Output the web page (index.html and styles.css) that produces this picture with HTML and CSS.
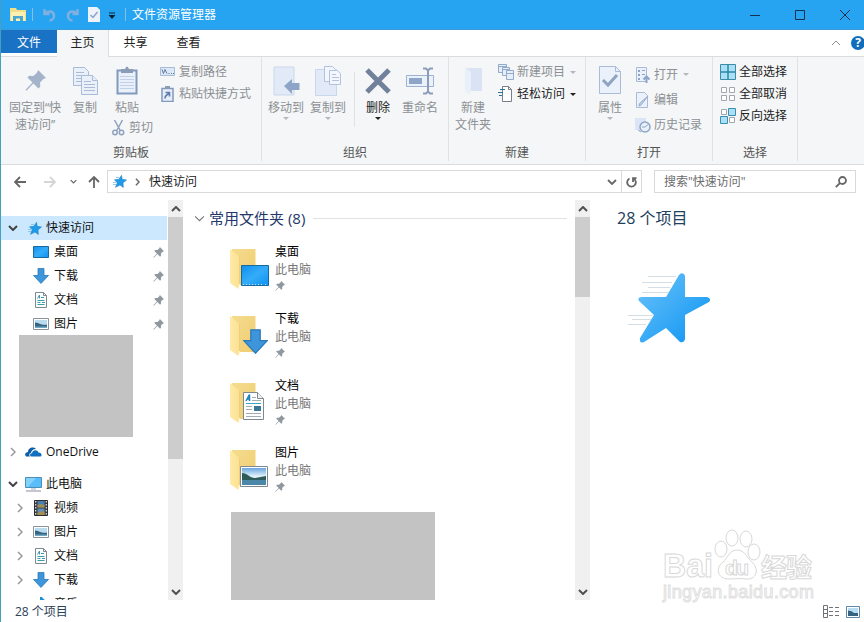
FILE: index.html
```
<!DOCTYPE html>
<html lang="zh-CN">

<head>
  <meta charset="utf-8">
  <title>文件资源管理器</title>
  <link rel="stylesheet" href="styles.css">
</head>

<body>
  <!-- 共用图标 -->
  <svg class="defs" width="0" height="0">
    <defs>
      <linearGradient id="blue" x1="0" y1="0" x2="1" y2="1">
        <stop offset="0" stop-color="#6cc4fa"/><stop offset="1" stop-color="#0a92f2"/>
      </linearGradient>
      <linearGradient id="screen" x1="0" y1="0" x2="1" y2="1">
        <stop offset="0" stop-color="#0d8ff0"/><stop offset=".5" stop-color="#35acf8"/><stop offset="1" stop-color="#0c92f2"/>
      </linearGradient>
      <linearGradient id="yellow" x1="0" y1="0" x2="1" y2="1">
        <stop offset="0" stop-color="#f5dc90"/><stop offset="1" stop-color="#efcd70"/>
      </linearGradient>
      <linearGradient id="front" x1="0" y1="0" x2="1" y2="0">
        <stop offset="0" stop-color="#ffeaa6"/><stop offset="1" stop-color="#fbe192"/>
      </linearGradient>
      <linearGradient id="sky" x1="0" y1="0" x2="0" y2="1">
        <stop offset="0" stop-color="#6aa5e0"/><stop offset=".5" stop-color="#e4f3fa"/>
      </linearGradient>
    </defs>
    <symbol id="pin" viewBox="0 0 12 12">
      <path d="M7.500 0L12 4.500l-1.500.7-1.900 2 .1 2.400-1 1-2.900-2.900-4 4.100-.5-.5 4-4.100L1.400 4.300l1-1 2.400.1 2-1.900z"/>
    </symbol>
    <symbol id="star" viewBox="0 0 72 70">
      <path d="M41 2Q43-1 46 1L47 3V24H69Q74 26 71 29L47 42V66Q46 70 42 69L28 55 6 69Q1 71 2 65L16 42 1 28Q-1 24 4 24H28Z" fill="url(#blue)"/>
    </symbol>
    <symbol id="star-sm" viewBox="0 0 14 13">
      <path d="M8.500.3L9.200 4.300 13.500 5 10 7.800 10.300 12.500 7 10 2.500 12.300 4.300 7.800 1.500 4.800 6 4.300z" fill="#1e9bea" stroke="#2483c0" stroke-width=".6"/>
      <path d="M3 2.500h3.500M0 7.500h3M0 9.500h3" stroke="#7cbfe6" stroke-width=".8"/>
    </symbol>
    <symbol id="desktop" viewBox="0 0 16 12">
      <path d="M.5.5h15v11H.5z" fill="url(#screen)" stroke="#17699f"/>
    </symbol>
    <symbol id="down" viewBox="0 0 16 16">
      <path d="M5 .5h6v7h4.500L8 15.500.5 7.500H5z" fill="#3d95dc" stroke="#2c78b8" stroke-width=".8"/>
    </symbol>
    <symbol id="doc" viewBox="0 0 12 16">
      <path d="M.5.5h8l3 3v12H.5z" fill="#fff" stroke="#7e8890"/>
      <path d="M8.500.5v3h3" fill="none" stroke="#7e8890"/>
      <path d="M2.500 6.500L4.500 3v3.500M6 5.500h3M2.500 8.500h7M2.500 10.500h3M2.500 12.500h7M7 10.500h3" fill="none" stroke="#3a9bab"/>
    </symbol>
    <symbol id="pic" viewBox="0 0 16 12">
      <path d="M.5.5h15v11H.5z" fill="#fff" stroke="#8b9299"/>
      <path d="M2 2h12v8H2z" fill="#b9dcf2"/>
      <path d="M2 4.500c3 0 5 2 8 2.200h4V10H2z" fill="#34647f"/>
      <path d="M2 8.500h12V10H2z" fill="#6fa7c6"/>
    </symbol>
    <symbol id="video" viewBox="0 0 14 16">
      <path d="M.5.5h13v15H.5z" fill="#3c3c40" stroke="#2d2d30"/>
      <path d="M3.500 1h7v6.500h-7z" fill="#4a7fb5"/><path d="M3.500 8.500h7V15h-7z" fill="#5f8fbd"/>
      <path d="M3.500 5l3-1 4 1v2.500h-7zM3.500 13l4-2 3 1v3h-7z" fill="#a58f4e"/>
      <path d="M1.700 1v14M12.300 1v14" stroke="#e8e8e8" stroke-width="1.200" stroke-dasharray="1.500 1.500"/>
    </symbol>
    <symbol id="folder" viewBox="0 0 27 42">
      <path d="M2 1h23.500v36H3z" fill="url(#yellow)"/>
      <path d="M0 1L9.500 9v27l-1 5-8.500-6z" fill="url(#front)"/>
      <path d="M9.500 9v27" stroke="#e9c873" stroke-width=".6"/>
      <path d="M8.500 41l1-5" stroke="#fff6d8" fill="none"/>
    </symbol>
    <symbol id="chev-r" viewBox="0 0 6 10"><path d="M1 1l4 4-4 4"/></symbol>
    <symbol id="chev-d" viewBox="0 0 10 6"><path d="M1 1l4 4 4-4"/></symbol>
    <symbol id="chev-u" viewBox="0 0 10 6"><path d="M1 5l4-4 4 4"/></symbol>
  </svg>

  <div class="window">
    <div class="titlebar">
      <svg class="app-icon" width="18" height="16" viewBox="0 0 18 16">
        <path d="M1 1h6l1 2h9v11H1z" fill="#f3df8a"/>
        <path d="M2 5h14v9H2z" fill="#fbf0b4"/>
        <path d="M4 14V9h10v5h-3v-2.500H7V14z" fill="#4ba6d2"/>
      </svg>
      <span class="divider"></span>
      <svg class="undo" width="13" height="14" viewBox="0 0 13 14"><path d="M1.500 1v5h5M2 5.500C5 2 11 3 11 8c0 3-2.500 4.500-4.500 4.500"/></svg>
      <svg class="redo" width="13" height="14" viewBox="0 0 13 14"><path d="M11.500 1v5h-5M11 5.500C8 2 2 3 2 8c0 3 2.500 4.500 4.500 4.500"/></svg>
      <svg class="check" width="12" height="15" viewBox="0 0 12 15"><path d="M0 0h9l3 3v12H0z" fill="#eef3fb"/><path d="M2.500 8l2.500 2.500L9.500 5" fill="none" stroke="#8ba3c9" stroke-width="1.500"/></svg>
      <svg class="custom" width="8" height="8" viewBox="0 0 8 8"><path d="M1 1h6" stroke="#123"/><path d="M.5 3h7L4 7z" fill="#123"/></svg>
      <span class="divider"></span>
      <span class="title">文件资源管理器</span>
      <div class="controls">
        <svg width="10" height="10"><path d="M0 5.500h10"/></svg>
        <svg width="10" height="10"><path d="M.5.5h9v9h-9z"/></svg>
        <svg width="10" height="10"><path d="M0 0l10 10M10 0L0 10"/></svg>
      </div>
    </div>

    <div class="tabs">
      <span class="tab file">文件</span>
      <span class="tab active">主页</span>
      <span class="tab">共享</span>
      <span class="tab">查看</span>
      <svg class="collapse" width="10" height="6"><use href="#chev-u"/></svg>
      <span class="help">?</span>
    </div>

    <div class="ribbon">
      <div class="group clipboard">
        <div class="tools">
          <div class="big w60 off">
            <div class="pic"><svg width="21" height="21" fill="#a5b3ca"><use href="#pin"/></svg></div>
            固定到“快<br>速访问”
          </div>
          <div class="big w38 off">
            <div class="pic"><svg width="25" height="28" viewBox="0 0 25 28" fill="#eaf0fa" stroke="#a9bbd6">
              <path d="M.5.5h11l4 4v14H.5z"/><path d="M3 5.500h8M3 8.500h10M3 11.500h10M3 14.500h10"/>
              <path d="M8.500 8.500h11l5 5v14h-16z"/><path d="M19.500 8.500v5h5M11 14.500h7M11 17.500h11M11 20.500h11M11 23.500h11"/>
            </svg></div>
            复制
          </div>
          <div class="paste-col off">
            <div class="big w38">
              <div class="pic"><svg width="22" height="29" viewBox="0 0 22 29">
                <path d="M1.500 4.500h19v23h-19z" fill="#e9f0fa" stroke="#8299bd" stroke-width="2"/>
                <path d="M5 7V3h4q2-5 4 0h4v4z" fill="#8b9cb7"/>
                <path d="M4 10.500h14M4 13.500h14M4 16.500h14M4 19.500h14M4 22.500h14" stroke="#c2d1e8"/>
              </svg></div>
              粘贴
            </div>
            <div class="small cut">
              <svg width="13" height="16" viewBox="0 0 13 16" fill="none" stroke="#8fa3bf" stroke-width="1.500"><path d="M2.500 0l6 11M10.500 0l-6 11"/><circle cx="3" cy="12.500" r="2.200"/><circle cx="9.500" cy="12.500" r="2.200"/></svg>剪切
            </div>
          </div>
          <div class="list off">
            <div class="small"><svg width="16" height="10" viewBox="0 0 16 10"><path d="M.5.5h14v8H.5z" fill="#dce8f7" stroke="#a9bbd6"/><path d="M2 2.500l1.500 4 1.500-4 2 4M8.500 6.500h1M11 6.500h1M13 6.500h1" stroke="#617aa3" fill="none"/></svg>复制路径</div>
            <div class="small"><svg width="16" height="16" viewBox="0 0 16 16"><path d="M2 2.500h11v13H2z" fill="#e6eefa" stroke="#8299bd" stroke-width="1.500"/><path d="M5 0h5v3H5z" fill="#8b9cb7"/><path d="M5 12.500q0-3 4-5M5.500 6.500h4v4" stroke="#5e7bae" stroke-width="1.600" fill="none"/></svg>粘贴快捷方式</div>
          </div>
        </div>
        <div class="name">剪贴板</div>
      </div>

      <div class="group organize">
        <div class="tools">
          <div class="big w42 off">
            <div class="pic"><svg width="27" height="30" viewBox="0 0 27 30"><path d="M1 1h20v28H1z" fill="#e2eaf7" stroke="#c9d7ec"/><path d="M11 20l8-7v4h7.500v7H19v4z" fill="#8fa5c8"/></svg></div>
            移动到<i class="arrow"></i>
          </div>
          <div class="big w42 off">
            <div class="pic"><svg width="27" height="30" viewBox="0 0 27 30" stroke="#b1c3df" fill="#e2eaf7"><path d="M.5 3.500h21v26H.5z" stroke="#c9d7ec"/><path d="M9.500.5h8l3 3v12h-11z" fill="#f3f7fd"/><path d="M14.500 4.500h8l3 3v11h-11z" fill="#f3f7fd"/><path d="M17 8.500h4M17 11.500h7M17 14.500h7" /></svg></div>
            复制到<i class="arrow"></i>
          </div>
          <span class="bar"></span>
          <div class="big w42">
            <div class="pic"><svg width="26" height="26" viewBox="0 0 26 26"><path d="M2 2l22 22M24 2L2 24" stroke="#72819b" stroke-width="5"/></svg></div>
            删除<i class="arrow"></i>
          </div>
          <div class="big w42 off">
            <div class="pic"><svg width="28" height="28" viewBox="0 0 28 28" fill="none" stroke="#9fb2d0"><path d="M.5 8.500h27v11H.5z" fill="#eaf1fb"/><path d="M3 11h13v6H3z" fill="#8fa5c8" stroke="none"/><path d="M17 1.500h3l2 2 2-2h3M22 3v22M17 26.500h3l2-2 2 2h3" stroke-width="2" stroke="#8b9db9"/></svg></div>
            重命名
          </div>
        </div>
        <div class="name">组织</div>
      </div>

      <div class="group new">
        <div class="tools">
          <div class="big w42 off">
            <div class="pic"><svg width="19" height="30" viewBox="0 0 19 30"><path d="M2 2h16v23H2z" fill="#d9e3f4"/><path d="M1 1l6 5v18l-1 5-5-4z" fill="#e9f0fa"/></svg></div>
            新建<br>文件夹
          </div>
          <div class="list">
            <div class="small off"><svg width="16" height="16" viewBox="0 0 16 16" fill="#e6eefa" stroke="#94aacb"><path d="M.5.5h8v8h-8z"/><path d="M4.500 3.500h7v8h-7z"/><path d="M8.500 6.500h7v9h-7z"/><path d="M.5 2.500h8M5 5.500h6M9 9.500h6"/></svg>新建项目<i class="arrow"></i></div>
            <div class="small"><svg width="16" height="16" viewBox="0 0 16 16" fill="none"><path d="M4.500.5h6l3 3v12h-9z" fill="#fff" stroke="#777f88"/><path d="M10.500.5v3h3" stroke="#777f88"/><path d="M2 3.500h5M0 6.500h5M1 9.500h3" stroke="#28759c"/></svg>轻松访问<i class="arrow"></i></div>
          </div>
        </div>
        <div class="name">新建</div>
      </div>

      <div class="group open">
        <div class="tools">
          <div class="big w42 off">
            <div class="pic"><svg width="22" height="29" viewBox="0 0 22 29" fill="none"><path d="M.5.5h16l5 5v22H.5z" fill="#eaf1fb" stroke="#a9bbd6"/><path d="M16.500.5v5h5" stroke="#a9bbd6"/><path d="M4 14l5 5 9-10" stroke="#8fa3c3" stroke-width="3"/></svg></div>
            属性<i class="arrow"></i>
          </div>
          <div class="list tall off">
            <div class="small"><svg width="16" height="16" viewBox="0 0 16 16" fill="none"><path d="M1.500.5h10v14h-10z" fill="#eaf1fb" stroke="#a9bbd6"/><path d="M3 3h2v2H3zM3 7h2v2H3zM3 11h2v2H3zM7 3h3v1H7zM7 7h3v1H7z" fill="#8fa5c8"/><path d="M11.500 16v-6M8.500 12.500l3-3 3 3" stroke="#8fa5c8" stroke-width="2"/></svg>打开<i class="arrow"></i></div>
            <div class="small"><svg width="16" height="16" viewBox="0 0 16 16" fill="none"><path d="M1.500.5h8l3 3v12h-11z" fill="#eaf1fb" stroke="#a9bbd6"/><path d="M13 4l-7 9-2 1 .5-2.500z" stroke="#94a9ca" fill="#c6d5eb"/></svg>编辑</div>
            <div class="small"><svg width="16" height="16" viewBox="0 0 16 16" fill="none"><path d="M0 1h11v12H0z" fill="#dbe5f5"/><circle cx="10" cy="10" r="5" fill="#eaf1fb" stroke="#8fa5c8" stroke-width="1.500"/><path d="M10 10l3-2.500M10 10H7M3 13l3 2" stroke="#8fa5c8"/></svg>历史记录</div>
          </div>
        </div>
        <div class="name">打开</div>
      </div>

      <div class="group select">
        <div class="tools">
          <div class="list">
            <div class="small"><svg width="16" height="16" viewBox="0 0 16 16"><path d="M.5.5h15v15H.5z" fill="#a9e0f6" stroke="#418ba9"/><path d="M8 0v16M0 8h16" stroke="#2f86ab" stroke-width="1.500"/></svg>全部选择</div>
            <div class="small"><svg width="16" height="16" viewBox="0 0 16 16" fill="#fff" stroke="#a3a7ab"><path d="M1.500 1.500h5v5h-5zM9.500 1.500h5v5h-5zM1.500 9.500h5v5h-5zM9.500 9.500h5v5h-5z"/></svg>全部取消</div>
            <div class="small"><svg width="16" height="16" viewBox="0 0 16 16" fill="#fff" stroke="#a3a7ab"><path d="M1.500 1.500h5v5h-5zM9.500 9.500h5v5h-5z"/><path d="M8.500.5h7v7h-7zM.5 8.500h7v7h-7z" fill="#a9e0f6" stroke="#3c8fb3"/></svg>反向选择</div>
          </div>
        </div>
        <div class="name">选择</div>
      </div>
    </div>

    <div class="navbar">
      <svg class="back" width="12" height="12"><path d="M12 6H1M6 1L1 6l5 5"/></svg>
      <svg class="forward" width="12" height="12"><path d="M0 6h11M6 1l5 5-5 5"/></svg>
      <svg class="recent" width="7" height="5"><use href="#chev-d"/></svg>
      <svg class="up" width="12" height="12"><path d="M6 12V1M1 6l5-5 5 5"/></svg>
      <div class="address">
        <svg class="nofx" width="14" height="13"><use href="#star-sm"/></svg>
        <svg class="sep" width="5" height="8"><use href="#chev-r"/></svg>
        <span class="path">快速访问</span>
        <svg class="drop" width="10" height="6"><use href="#chev-d"/></svg>
        <span class="refresh"><svg width="11" height="12" viewBox="0 0 11 12"><path d="M3.500 2.500A4.300 4.300 0 1 0 7.500 2.500M7 6V2.200h3.500"/></svg></span>
      </div>
      <div class="search">
        <span>搜索"快速访问"</span>
        <svg width="12" height="12"><circle cx="7.500" cy="4.500" r="3.500"/><path d="M5 7L.8 11.200"/></svg>
      </div>
    </div>

    <div class="content">
      <div class="sidebar">
        <div class="row root selected"><svg class="exp open" width="10" height="6"><use href="#chev-d"/></svg><svg class="ico" width="14" height="13"><use href="#star-sm"/></svg>快速访问</div>
        <div class="row"><svg class="ico" width="16" height="12"><use href="#desktop"/></svg>桌面<svg class="pinned" width="11" height="11"><use href="#pin"/></svg></div>
        <div class="row"><svg class="ico" width="16" height="16"><use href="#down"/></svg>下载<svg class="pinned" width="11" height="11"><use href="#pin"/></svg></div>
        <div class="row"><svg class="ico" width="16" height="16"><use href="#doc"/></svg>文档<svg class="pinned" width="11" height="11"><use href="#pin"/></svg></div>
        <div class="row"><svg class="ico" width="16" height="12"><use href="#pic"/></svg>图片<svg class="pinned" width="11" height="11"><use href="#pin"/></svg></div>
        <div class="mask"></div>
        <div class="row root"><svg class="exp" width="6" height="10"><use href="#chev-r"/></svg><svg class="ico" width="17" height="10" viewBox="0 0 17 10"><path d="M1 9.500C-1 7 1 5 3 5 3 1 8-1 11 2 8 2 6 4 6 6 4 6 4 8.500 5 9.500z" fill="#0f5fa8"/><path d="M6 9.500C4 8 5.500 6 7 6.200 7.500 2.500 12.500 2 13.500 5.500 17 5.500 17.500 9.500 15 9.500z" fill="#0f6fc0"/></svg>OneDrive</div>
        <div class="row root pc"><svg class="exp open" width="10" height="6"><use href="#chev-d"/></svg><svg class="ico" width="17" height="16" viewBox="0 0 17 16"><path d="M.5 1.500h16v10H.5z" fill="#58bdf8" stroke="#4a8fb8"/><path d="M1 2l10 0-8 9H1z" fill="#82d2fc"/><path d="M6 13h5" stroke="#9fb3c0"/><path d="M1 15h15" stroke="#8b8fa0"/></svg>此电脑</div>
        <div class="row"><svg class="exp" width="6" height="10"><use href="#chev-r"/></svg><svg class="ico" width="16" height="16"><use href="#video"/></svg>视频</div>
        <div class="row"><svg class="exp" width="6" height="10"><use href="#chev-r"/></svg><svg class="ico" width="16" height="12"><use href="#pic"/></svg>图片</div>
        <div class="row"><svg class="exp" width="6" height="10"><use href="#chev-r"/></svg><svg class="ico" width="16" height="16"><use href="#doc"/></svg>文档</div>
        <div class="row"><svg class="exp" width="6" height="10"><use href="#chev-r"/></svg><svg class="ico" width="16" height="16"><use href="#down"/></svg>下载</div>
        <div class="row"><svg class="ico" width="16" height="16" viewBox="0 0 16 16"><path d="M8 1v10M8 1c1 3 4 3 4 6" stroke="#1d8fd0" stroke-width="2" fill="none"/><circle cx="6" cy="12" r="3" fill="#1d8fd0"/></svg>音乐</div>
      </div>
      <div class="scrollbar">
        <svg width="10" height="6"><use href="#chev-u"/></svg>
        <div class="thumb long"></div>
        <svg width="10" height="6"><use href="#chev-d"/></svg>
      </div>

      <div class="files">
        <div class="heading"><svg width="11" height="7"><use href="#chev-d"/></svg><span>常用文件夹 (8)</span></div>
        <div class="item">
          <svg width="40" height="42"><use href="#folder" width="27" height="42"/>
            <path d="M11.500 17.500h27v20h-27z" fill="url(#screen)" stroke="#17699f"/><path d="M13 36.500h20M35 36.500h3" stroke="#bfe3fb" stroke-dasharray="1 2"/>
          </svg>
          <div class="info"><b>桌面</b><span>此电脑</span><svg width="10" height="10"><use href="#pin"/></svg></div>
        </div>
        <div class="item">
          <svg width="40" height="42"><use href="#folder" width="27" height="42"/><use href="#down" x="13" y="14" width="25" height="25"/></svg>
          <div class="info"><b>下载</b><span>此电脑</span><svg width="10" height="10"><use href="#pin"/></svg></div>
        </div>
        <div class="item">
          <svg width="40" height="42"><use href="#folder" width="27" height="42"/>
            <path d="M13.500 10.500h14l6 6v21h-20z" fill="#fff" stroke="#7e8890"/><path d="M27.500 10.500v6h6" fill="#eef1f4" stroke="#7e8890"/>
            <path d="M16 19l3.500-6.500V19M17 17h3" fill="none" stroke="#1c7fc0" stroke-width="1.500"/>
            <path d="M22 15.500h4M22 18.500h9M16 24.500h6M16 27.500h6M16 31.500h15M16 34.500h15" stroke="#a3acb3"/><path d="M16 21.500h15" stroke="#3fa4c9"/>
            <path d="M24 24h7v5h-7z" fill="#3a7898"/>
          </svg>
          <div class="info"><b>文档</b><span>此电脑</span><svg width="10" height="10"><use href="#pin"/></svg></div>
        </div>
        <div class="item">
          <svg width="40" height="42"><use href="#folder" width="27" height="42"/>
            <path d="M10.500 17.500h27v20h-27z" fill="#fff" stroke="#7e8890"/><path d="M12 19h24v17H12z" fill="url(#sky)"/>
            <path d="M12 24c5 0 8 5 13 5l11-2v4H12z" fill="#2f5c5a"/><path d="M12 31h24v5H12z" fill="#4b87a8"/>
          </svg>
          <div class="info"><b>图片</b><span>此电脑</span><svg width="10" height="10"><use href="#pin"/></svg></div>
        </div>
        <div class="mask"></div>
      </div>
      <div class="scrollbar">
        <svg width="10" height="6"><use href="#chev-u"/></svg>
        <div class="thumb short"></div>
        <svg width="10" height="6"><use href="#chev-d"/></svg>
      </div>

      <div class="preview">
        <div class="count">28 个项目</div>
        <svg width="84" height="72" viewBox="0 0 84 72">
          <path d="M20 4.500h28M14 10.500h30M20 15.500h22M14 20.500h26M0 43.500h25M4 47.500h20M0 52.500h18" stroke="#d3dfe4"/>
          <use href="#star" x="10" y="1" width="72" height="70"/>
        </svg>
      </div>
    </div>

    <div class="statusbar">
      <span>28 个项目</span>
      <svg width="16" height="14" viewBox="0 0 16 14" fill="none" stroke="#6f7478"><path d="M.5.500h4v12h-4zM.5 4.500h4M.5 8.500h4M6 2.500h4M12 2.500h4M6 6.500h4M12 6.500h4M6 10.500h4M12 10.500h4"/></svg>
      <svg width="14" height="12" viewBox="0 0 14 12"><path d="M.5.5h13v11H.5z" fill="#fff" stroke="#5c8aa8"/><path d="M2 2h10v8H2z" fill="#b9dcf2"/><path d="M2 4.500q4 0 6 2.500h4v3H2z" fill="#34647f"/></svg>
    </div>

    <svg class="watermark" width="160" height="80" viewBox="0 0 160 80">
      <text class="logo" x="3" y="50" textLength="50" lengthAdjust="spacingAndGlyphs">Bai</text>
      <ellipse cx="61" cy="22" rx="6" ry="8"/><ellipse cx="72" cy="11" rx="6" ry="8"/><ellipse cx="86" cy="12" rx="6" ry="8"/><ellipse cx="94" cy="25" rx="6" ry="8"/>
      <path d="M77 23c-8 0-9 8-14 12-9 7-4 17 5 17 6 0 12-1 18 0 10 1 14-9 6-17-5-4-7-12-15-12z"/>
      <text class="du" x="65" y="48" textLength="24">du</text>
      <text class="exp-cn" x="101" y="50" textLength="51">经验</text>
      <text class="url" x="3" y="71" textLength="151">jingyan.baidu.com</text>
    </svg>
  </div>
</body>
</html>
```
FILE: styles.css
```
* {
  box-sizing: border-box;
}
body {
  margin: 0;
  font: 12px/18px "Open Sans", "Noto Sans CJK SC", sans-serif;
  color: #222;
}
svg {
  display: block;
  flex: none;
}
.defs {
  position: absolute;
}
.window {
  position: relative;
  width: 864px;
  height: 622px;
  border-left: 1px solid #45a0c0;
  background: #fff;
  overflow: hidden;
}

/* 标题栏 */
.titlebar {
  height: 30px;
  display: flex;
  align-items: center;
  padding-left: 8px;
  background: #26a4f2;
  border-bottom: 1px solid #3a9bd8;
}
.divider {
  width: 1px;
  height: 13px;
  background: #86c0e6;
}
.app-icon { margin-right: 5px; }
.undo, .redo {
  fill: none;
  stroke: #7fb0e0;
  stroke-width: 2.500;
}
.undo { margin: 0 10px 0 10px; }
.redo { margin-right: 9px; }
.custom { margin: 3px 9px 0 8px; }
.title {
  margin-left: 6px;
  color: #fff;
}
.controls {
  display: flex;
  gap: 35px;
  margin-left: auto;
  padding-right: 14px;
}
.controls svg {
  fill: none;
  stroke: #16304d;
}

/* 标签 */
.tabs {
  height: 26px;
  display: flex;
  position: relative;
}
.tab {
  height: 26px;
  width: 53px;
  line-height: 25px;
  text-align: center;
}
.tab.file {
  width: 56px;
  height: 23px;
  background: #1a72c4;
  color: #fff;
}
.tab.active {
  height: 27px;
  width: 52px;
  background: #f4f6f7;
  border-right: 1px solid #dcdee0;
  z-index: 1;
}
.collapse {
  margin: 10px 10px 0 auto;
  fill: none;
  stroke: #8d9094;
}
.help {
  width: 14px;
  height: 14px;
  margin: 6px -1px 0 0;
  border-radius: 7px;
  background: #0f6dbb;
  color: #fff;
  font-weight: bold;
  line-height: 14px;
  text-align: center;
}

/* 功能区 */
.ribbon {
  height: 109px;
  display: flex;
  background: #f4f6f7;
  border-top: 1px solid #dadcde;
  border-bottom: 1px solid #dadcde;
}
.group {
  height: 104px;
  border-right: 1px solid #e0e2e4;
}
.clipboard { width: 261px; }
.organize { width: 187px; }
.new { width: 137px; }
.open { width: 127px; }
.select { width: 85px; }
.tools {
  height: 86px;
  display: flex;
}
.name {
  text-align: center;
  line-height: 19px;
  color: #555;
}
.big {
  padding-top: 5px;
  line-height: 17px;
  text-align: center;
  white-space: nowrap;
}
.big .pic {
  height: 37px;
  display: flex;
  align-items: center;
  justify-content: center;
}
.w60 { width: 60px; }
.w38 { width: 38px; }
.w42 { width: 42px; }
.off { color: #8c9094; }
.arrow {
  width: 0;
  height: 0;
  border: 3px solid transparent;
  border-top-color: #222;
  border-bottom: 0;
}
.off .arrow, .off.small .arrow {
  border-top-color: #b4b8bc;
}
.big .arrow {
  display: block;
  margin: 1px auto 0;
}
.small .arrow {
  margin-left: 2px;
}
.small {
  height: 22px;
  display: flex;
  align-items: center;
  gap: 3px;
  white-space: nowrap;
}
.list {
  padding-top: 4px;
}
.tall {
  padding-top: 5px;
}
.tall .small {
  height: 25px;
  gap: 3px;
}
.cut {
  margin: 1px 0 0 4px;
  gap: 4px;
}
.clipboard .tools { padding-left: 4px; }
.clipboard .w38 { margin-left: 1px; }
.clipboard .paste-col { width: 53px; margin-left: 4px; }
.clipboard .paste-col .w38 { margin-left: 0; }
.clipboard .list { margin-left: -1px; }
.organize .tools { padding-left: 3px; }
.bar {
  width: 1px;
  height: 55px;
  margin: 15px 2px 0 5px;
  background: #e0e2e4;
}
.new .tools { padding-left: 3px; }
.new .list { margin-left: 4px; }
.new .small .arrow { margin-left: 2px; }
.open .tools { padding-left: 3px; }
.open .list { margin-left: 4px; }
.select .tools { padding-left: 7px; }

/* 地址栏 */
.navbar {
  height: 35px;
  display: flex;
  align-items: center;
  padding: 0 8px 2px 13px;
}
.navbar svg {
  fill: none;
  stroke: #666;
  stroke-width: 1.800;
}
.navbar .forward {
  margin: 0 14px 0 18px;
  stroke: #d3d5d7;
}
.navbar .up {
  margin: 0 7px 0 11px;
}
.address {
  width: 535px;
  height: 23px;
  display: flex;
  align-items: center;
  padding-left: 5px;
  border: 1px solid #d9d9d9;
}
.address .sep {
  margin: 0 9px 0 8px;
}
.address .drop {
  margin: 0 4px 0 auto;
}
.navbar .address .nofx { stroke: none; }
.refresh {
  width: 20px;
  height: 21px;
  display: flex;
  align-items: center;
  justify-content: center;
  border-left: 1px solid #d9d9d9;
}
.search {
  width: 202px;
  height: 23px;
  display: flex;
  align-items: center;
  justify-content: space-between;
  margin-left: 12px;
  padding: 0 8px 0 9px;
  border: 1px solid #d9d9d9;
  color: #6c6c6c;
}

.content {
  height: 400px;
  display: flex;
}

/* 导航窗格 */
.sidebar {
  width: 167px;
  height: 400px;
  padding-top: 16px;
  overflow: hidden;
}
.row {
  height: 24px;
  display: flex;
  align-items: center;
  padding-left: 32px;
  width: 166px;
  color: #111;
}
.row.root { padding-left: 24px; }
.row .ico { margin-right: 5px; }
.row.root .ico { margin-right: 4px; }
.row .exp {
  margin: 0 9px 0 -15px;
  width: 6px;
  fill: none;
  stroke: #999;
  stroke-width: 1.500;
}
.row:not(.root) .exp { margin: 0 10px 0 -16px; }
.row .exp.open {
  width: 10px;
  margin: 0 7px 0 -17px;
  stroke: #444;
  stroke-width: 2;
}
.row.selected {
  background: #cce8ff;
}
.row.root.selected .ico { margin-left: 3px; }
.row .pinned {
  margin: 0 3px 0 auto;
  fill: #8f989f;
}
.sidebar .mask {
  width: 114px;
  height: 102px;
  margin: -1px 0 3px 18px;
  background: #c3c3c3;
}
.pc { margin-top: 8px; }

.scrollbar {
  width: 15px;
  height: 400px;
  display: flex;
  flex-direction: column;
  align-items: center;
  padding: 6px 0 5px;
  background: #f0f0f0;
}
.scrollbar svg {
  fill: none;
  stroke: #505050;
  stroke-width: 2;
}
.thumb {
  width: 15px;
  margin: 5px 0 auto;
  background: #cdcdcd;
}
.long { height: 242px; }
.short { height: 80px; }

/* 文件列表 */
.files {
  width: 392px;
  padding: 8px 8px 0 11px;
}
.heading {
  height: 20px;
  display: flex;
  align-items: center;
  margin-bottom: 15px;
  color: #23376b;
  font-size: 15px;
}
.heading svg {
  margin-right: 4px;
  fill: none;
  stroke: #777;
}
.heading::after {
  content: "";
  flex: 1;
  height: 1px;
  margin-left: 8px;
  background: #dfe1e4;
}
.item {
  height: 67px;
  display: flex;
  padding: 0 0 0 36px;
}
.item > svg { margin-top: 5px; }
.info {
  display: flex;
  flex-direction: column;
  margin-left: 5px;
}
.info b {
  font-weight: normal;
  color: #000;
}
.info span { color: #777; }
.info svg {
  margin-top: 2px;
  fill: #8f989f;
}
.files .mask {
  width: 204px;
  height: 88px;
  margin: 1px 0 0 37px;
  background: #c3c3c3;
}

.preview {
  padding: 6px 0 0 27px;
}
.count {
  font-size: 16px;
  line-height: 24px;
  color: #22405c;
}
.preview svg {
  margin: 42px 0 0 11px;
}

.statusbar {
  height: 22px;
  display: flex;
  align-items: center;
  padding: 1px 4px 0 14px;
  color: #2b4258;
}
.statusbar span { margin-right: auto; }
.statusbar svg + svg { margin-left: 7px; }

/* 水印 */
.watermark {
  position: absolute;
  left: 659px;
  top: 527px;
  fill: #fff;
  stroke: #d8d8d8;
}
.watermark text {
  font-family: "Liberation Sans", "Noto Sans CJK SC", sans-serif;
  font-weight: bold;
}
.watermark .logo { font-size: 34px; }
.watermark .du { font-size: 21px; }
.watermark .exp-cn { font-size: 26px; }
.watermark .url {
  font-size: 18px;
  font-weight: normal;
  stroke: #e0e0e0;
}
```
